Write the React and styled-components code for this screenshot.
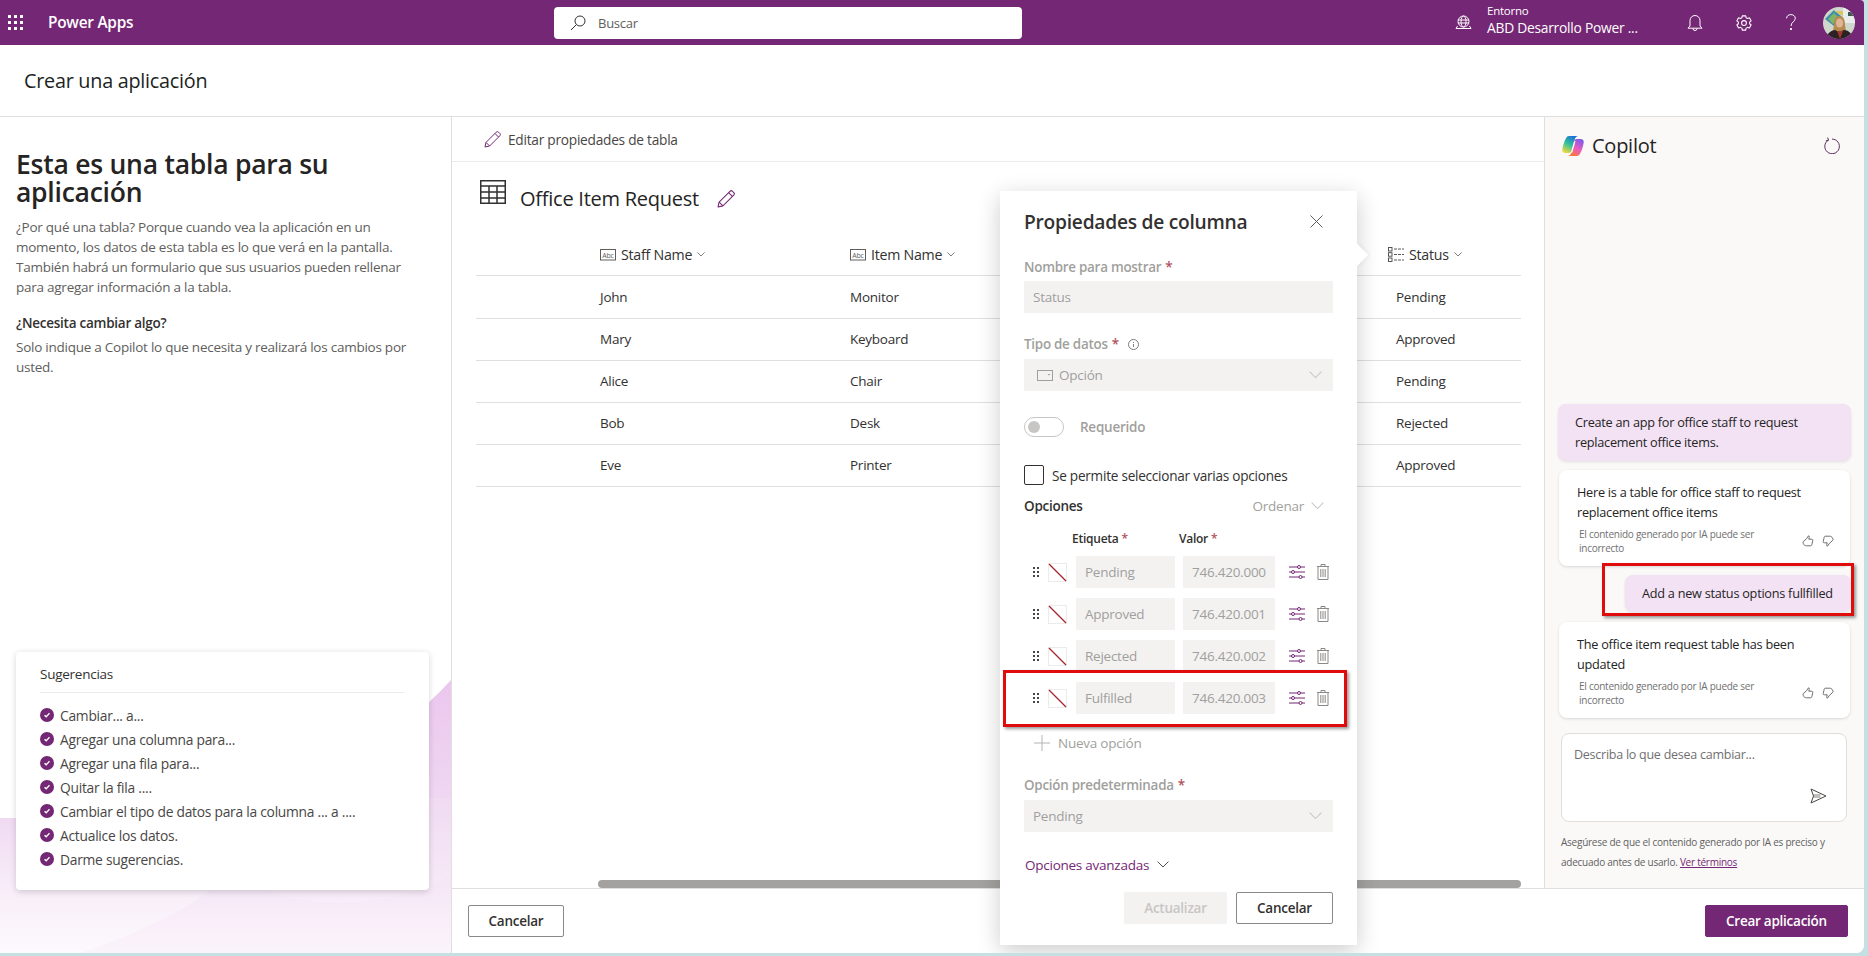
import React from 'react';
import styled, { createGlobalStyle } from 'styled-components';

const font = '"Open Sans", "Noto Sans", sans-serif';
const purple = '#742774';
const disabledText = '#a19f9d';

const GlobalStyle = createGlobalStyle`
  html, body {
    margin: 0;
    height: 100%;
    background: #c5e0e2;
    overflow: hidden;
  }
  * { box-sizing: border-box; }
  body {
    font-family: ${font};
    font-size: 14px;
    letter-spacing: -0.25px;
    color: #323130;
  }
`;

const Page = styled.div`
  position: relative;
  width: 1864px;
  height: 953px;
  background: #fff;
  display: flex;
  flex-direction: column;
  border-radius: 0 4px 8px 0;
  overflow: hidden;
`;

/* top bar */
const TopBar = styled.header`
  height: 45px;
  flex: none;
  background: ${purple};
  color: #fff;
  display: grid;
  grid-template-columns: 554px 468px 1fr;
  align-items: center;
`;
const Brand = styled.div`
  display: flex;
  align-items: center;
  padding-left: 8px;
  gap: 25px;
  font-size: 15.4px;
  font-weight: 600;
`;
const SearchBox = styled.div`
  height: 32px;
  background: #fff;
  border-radius: 4px;
  display: flex;
  align-items: center;
  gap: 12px;
  padding-left: 16px;
  color: #605e5c;
  font-size: 13px;
`;
const TopRight = styled.div`
  display: flex;
  align-items: center;
  padding-left: 433px;
`;
const EnvText = styled.div`
  margin-left: 15px;
  width: 200px;
  display: flex;
  flex-direction: column;
  small { font-size: 11.5px; line-height: 16px; margin-top: -6px; }
  span { font-size: 13.8px; line-height: 17px; }
`;
const TopIcon = styled.div`
  width: ${(p) => p.w || 16}px;
  margin-right: ${(p) => p.mr || 0}px;
  display: flex;
`;

/* page title */
const TitleBar = styled.div`
  height: 72px;
  flex: none;
  border-bottom: 1px solid #e1dfdd;
  padding-left: 24px;
  display: flex;
  align-items: center;
  font-size: 19.8px;
  font-weight: 500;
  color: #201f1e;
`;

const Main = styled.div`
  flex: 1;
  min-height: 0;
  display: flex;
`;

/* left column */
const Intro = styled.aside`
  position: relative;
  width: 452px;
  flex: none;
  border-right: 1px solid #e1dfdd;
  display: flex;
  flex-direction: column;
  padding: 33px 22px 63px 16px;
`;
const Wave = styled.svg`
  position: absolute;
  left: 0;
  bottom: 0;
  width: 451px;
  height: 275px;
`;
const IntroTitle = styled.h1`
  margin: 0;
  font-size: 26.5px;
  line-height: 28px;
  font-weight: 600;
  color: #252423;
`;
const IntroText = styled.p`
  margin: ${(p) => p.$mt}px 0 0;
  font-size: 13.5px;
  line-height: 20px;
  color: #605e5c;
`;
const IntroHeading = styled.h3`
  margin: 16px 0 0;
  font-size: 13.5px;
  line-height: 20px;
  font-weight: 600;
  color: #323130;
`;
const TipsCard = styled.section`
  position: relative;
  margin-top: auto;
  background: #fff;
  border-radius: 4px;
  box-shadow: 0 1.6px 6px rgba(0, 0, 0, 0.16);
  padding: 12px 25px 19px 24px;
`;
const TipsTitle = styled.div`
  font-size: 13.5px;
  line-height: 20px;
  font-weight: 500;
  padding-bottom: 8px;
  border-bottom: 1px solid #edebe9;
  margin-bottom: 10px;
`;
const Tip = styled.div`
  height: 24px;
  display: flex;
  align-items: center;
  gap: 6px;
  font-size: 13.8px;
  color: #484644;
`;

/* middle and copilot */
const Workspace = styled.div`
  flex: 1;
  min-width: 0;
  display: flex;
  flex-direction: column;
`;
const WorkTop = styled.div`
  flex: 1;
  min-height: 0;
  display: flex;
`;
const TableArea = styled.div`
  flex: 1;
  min-width: 0;
  display: flex;
  flex-direction: column;
`;
const Toolbar = styled.div`
  height: 45px;
  flex: none;
  border-bottom: 1px solid #edebe9;
  padding-left: 32px;
  display: flex;
  align-items: center;
  gap: 7px;
  font-size: 13.7px;
  color: #484644;
`;
const TableHead = styled.div`
  height: 74px;
  flex: none;
  padding: 18px 0 0 28px;
  display: flex;
  align-items: flex-start;
  color: #252423;
`;
const TableName = styled.div`
  margin: 6px 18px 0 14px;
  font-size: 20px;
  line-height: 26px;
  font-weight: 500;
`;
const TitlePencil = styled.div`
  margin-top: 10px;
`;
const TableGrid = styled.div`
  margin: 0 23px 0 24px;
`;
const Row = styled.div`
  display: grid;
  grid-template-columns: 124px 250px 546px 1fr;
  align-items: center;
  height: ${(p) => (p.$head ? 40 : 42)}px;
  margin-bottom: ${(p) => (p.$head ? 1 : 0)}px;
  padding-bottom: ${(p) => (p.$head ? 2 : 1)}px;
  border-bottom: 1px solid #e1dfdd;
  font-size: 13.5px;
  color: #323130;
`;
const HeadCell = styled.div`
  display: flex;
  align-items: center;
  gap: 5px;
  font-size: 14.2px;
  font-weight: 500;
  margin-left: ${(p) => p.$ml || 0}px;
`;
const Scroll = styled.div`
  margin: auto 23px 0 146px;
  height: 8px;
  flex: none;
  border-radius: 4px;
  background: #a3a2a1;
`;

const Copilot = styled.aside`
  width: 320px;
  flex: none;
  background: #faf9f8;
  border-left: 1px solid #e1dfdd;
  padding: 0 13px 16px;
  display: flex;
  flex-direction: column;
`;
const CopilotHead = styled.div`
  display: flex;
  align-items: center;
  padding: 15px 11px 0 4px;
  font-size: 20px;
  font-weight: 500;
  color: #252423;
  gap: 8px;
  span { flex: 1; }
`;
const Chat = styled.div`
  margin-top: auto;
  display: flex;
  flex-direction: column;
`;
const Bubble = styled.div`
  position: relative;
  align-self: flex-end;
  width: ${(p) => p.$w}px;
  margin-top: ${(p) => p.$mt || 0}px;
  padding: 8px 0 9px 17px;
  border-radius: 8px;
  background: #f3e2f4;
  box-shadow: 0 1px 3px rgba(0, 0, 0, 0.1);
  font-size: 12.7px;
  line-height: 20px;
  color: #242424;
  ${(p) => p.$marked && `
    &::after {
      content: '';
      position: absolute;
      inset: -12px -3px -4px -23px;
      border: 3px solid #e00b0b;
      box-shadow: 2px 2px 3px rgba(0, 0, 0, 0.4);
    }
  `}
`;
const Answer = styled.div`
  margin: ${(p) => p.$mt}px 1px 0;
  height: 96px;
  padding: 11.5px 16px 0 18px;
  border-radius: 8px;
  background: #fff;
  box-shadow: 0 1px 3px rgba(0, 0, 0, 0.14);
  font-size: 12.7px;
  line-height: 20px;
  color: #242424;
`;
const AnswerFoot = styled.div`
  display: flex;
  align-items: center;
  justify-content: space-between;
  margin-top: 5.5px;
  padding-left: 2px;
  small {
    width: 185px;
    font-size: 10px;
    line-height: 14px;
    color: #707070;
  }
`;
const Thumbs = styled.div`
  display: flex;
  gap: 8px;
`;
const PromptBox = styled.div`
  position: relative;
  margin: 15px 4px 0 3px;
  height: 89px;
  background: #fff;
  border: 1px solid #e0dedc;
  border-radius: 8px;
  padding: 11px 12px;
  font-size: 12.5px;
  line-height: 20px;
  color: #707070;
  display: flex;
  flex-direction: column;
  svg { align-self: flex-end; margin: 23px 7px 0 0; }
`;
const Disclaimer = styled.div`
  margin: 10px 0 0 3px;
  font-size: 10px;
  line-height: 20px;
  color: #616161;
  a { color: ${purple}; text-decoration: underline; }
`;

const Footer = styled.div`
  height: 65px;
  flex: none;
  border-top: 1px solid #e1dfdd;
  background: #fff;
  padding: 0 16px;
  display: flex;
  align-items: center;
  justify-content: space-between;
`;
const Button = styled.button`
  height: 32px;
  width: ${(p) => p.$w}px;
  padding: 0;
  font-family: ${font};
  font-size: 13.5px;
  letter-spacing: -0.25px;
  font-weight: 600;
  border-radius: 2px;
  border: 1px solid ${(p) => (p.$kind === 'primary' ? purple : p.$kind === 'off' ? '#f3f2f1' : '#8a8886')};
  background: ${(p) => (p.$kind === 'primary' ? purple : p.$kind === 'off' ? '#f3f2f1' : '#fff')};
  color: ${(p) => (p.$kind === 'primary' ? '#fff' : p.$kind === 'off' ? '#c8c6c4' : '#323130')};
`;

/* column properties panel */
const Panel = styled.div`
  position: absolute;
  left: 1000px;
  top: 191px;
  width: 357px;
  height: 754px;
  background: #fff;
  padding: 14px 24px 0;
  box-shadow: 0 6px 22px rgba(0, 0, 0, 0.2);
  &::after {
    content: '';
    position: absolute;
    left: 349px;
    top: 56px;
    width: 16px;
    height: 16px;
    background: #fff;
    transform: rotate(45deg);
    box-shadow: 2px -2px 4px rgba(0, 0, 0, 0.04);
  }
`;
const PanelTitle = styled.div`
  height: 32px;
  margin-bottom: 20px;
  display: flex;
  align-items: center;
  justify-content: space-between;
  padding-right: 10px;
  font-size: 19.2px;
  font-weight: 600;
  color: #323130;
`;
const Label = styled.div`
  margin-top: ${(p) => p.$mt}px;
  height: 20px;
  display: flex;
  align-items: center;
  font-size: 13.4px;
  font-weight: 600;
  color: ${disabledText};
  i { font-style: normal; color: #b0525a; margin-left: 4px; }
  svg { margin-left: 9px; }
`;
const Field = styled.div`
  margin-top: ${(p) => p.$mt}px;
  height: 32px;
  background: #f3f2f1;
  display: flex;
  align-items: center;
  justify-content: space-between;
  padding: 0 9px;
  font-size: 13.5px;
  color: ${disabledText};
  > svg:last-child { margin-right: 2px; }
`;
const FieldIcon = styled.span`
  display: flex;
  align-items: center;
  gap: 6px;
  padding-left: 4px;
`;
const Toggle = styled.div`
  margin-top: 26px;
  height: 20px;
  display: flex;
  align-items: center;
  gap: 16px;
  font-size: 13.5px;
  font-weight: 600;
  color: ${disabledText};
`;
const ToggleTrack = styled.span`
  width: 40px;
  height: 20px;
  border: 1px solid #c8c6c4;
  border-radius: 10px;
  padding: 3px;
  &::before {
    content: '';
    display: block;
    width: 12px;
    height: 12px;
    border-radius: 50%;
    background: #c8c6c4;
  }
`;
const CheckRow = styled.div`
  margin-top: 28px;
  height: 20px;
  display: flex;
  align-items: center;
  gap: 8px;
  font-size: 13.6px;
`;
const CheckBox = styled.span`
  width: 20px;
  height: 20px;
  border: 1px solid #323130;
  border-radius: 2px;
`;
const OptionsHead = styled.div`
  margin-top: 11px;
  height: 20px;
  display: flex;
  align-items: center;
  justify-content: space-between;
  font-size: 13.5px;
  font-weight: 600;
  span {
    display: flex;
    align-items: center;
    gap: 7px;
    padding-right: 9px;
    font-weight: 400;
    color: ${disabledText};
  }
`;
const OptionCols = styled.div`
  margin-top: 12px;
  height: 20px;
  padding-left: 48px;
  display: grid;
  grid-template-columns: 107px 1fr;
  align-items: center;
  font-size: 12px;
  font-weight: 600;
  i { font-style: normal; color: #b0525a; margin-left: 3px; }
`;
const OptionList = styled.div`
  margin-top: 8px;
  display: flex;
  flex-direction: column;
  gap: 10px;
`;
const OptionRow = styled.div`
  position: relative;
  height: 32px;
  display: flex;
  align-items: center;
  ${(p) => p.$marked && `
    &::after {
      content: '';
      position: absolute;
      inset: -12px -14px -13px -21px;
      border: 3px solid #e00b0b;
      box-shadow: 2px 2px 3px rgba(0, 0, 0, 0.4);
    }
  `}
`;
const Grip = styled.span`
  width: 24px;
  padding-left: 9px;
  display: flex;
`;
const Swatch = styled.svg`
  width: 19px;
  height: 19px;
  margin-right: 9px;
`;
const OptionInput = styled.div`
  width: ${(p) => p.$w}px;
  margin-right: ${(p) => p.$mr}px;
  height: 32px;
  background: #f3f2f1;
  padding-left: 9px;
  display: flex;
  align-items: center;
  font-size: 13.5px;
  color: ${disabledText};
`;
const AddOption = styled.div`
  margin-top: 17px;
  height: 24px;
  padding-left: 10px;
  display: flex;
  align-items: center;
  gap: 8px;
  font-size: 13.5px;
  color: ${disabledText};
`;
const Advanced = styled.div`
  margin-top: 23px;
  height: 20px;
  padding-left: 1px;
  display: flex;
  align-items: center;
  gap: 8px;
  font-size: 13.5px;
  color: ${purple};
`;
const PanelButtons = styled.div`
  margin-top: 17px;
  display: flex;
  justify-content: flex-end;
  gap: 9px;
`;

/* drawings */
const Waffle = () => (
  <svg width="15" height="15" viewBox="0 0 15 15" fill="#fff">
    {[0, 6, 12].map((y) => [0, 6, 12].map((x) => <rect key={`${x}${y}`} x={x} y={y} width="3" height="3" />))}
  </svg>
);
const SearchIcon = () => (
  <svg width="16" height="16" viewBox="0 0 16 16" fill="none" stroke="#323130" strokeWidth="1">
    <circle cx="10" cy="6" r="5" />
    <path d="M6.4 9.6 1 15" />
  </svg>
);
const GlobeIcon = () => (
  <svg width="17" height="16" viewBox="0 0 17 16" fill="none" stroke="#fff" strokeWidth="1">
    <circle cx="8.5" cy="6.5" r="5.5" />
    <ellipse cx="8.5" cy="6.5" rx="2.5" ry="5.5" />
    <path d="M3 5h11M3 8h11M1 13.5h15l-1.5-2.5M1 13.5 2.5 11" />
  </svg>
);
const BellIcon = () => (
  <svg width="16" height="17" viewBox="0 0 16 17" fill="none" stroke="#fff" strokeWidth="1">
    <path d="M3 12V6.5a5 5 0 0 1 10 0V12l2 2.2H1z" strokeLinejoin="round" />
    <path d="M6 14.5a2 2 0 0 0 4 0" />
  </svg>
);
const GearIcon = () => (
  <svg width="18" height="18" viewBox="0 0 24 24" fill="none" stroke="#fff" strokeWidth="1.4">
    <path d="M9.67 21.5 9.2 18.9a7.6 7.6 0 0 1-1.9-1.1l-2.5.9-2.3-4 2-1.700a7.6 7.6 0 0 1 0-2.200l-2-1.700 2.300-4 2.500.9a7.6 7.6 0 0 1 1.900-1.100l.47-2.400h4.660l.47 2.400a7.600 7.600 0 0 1 1.900 1.100l2.500-.9 2.300 4-2 1.700a7.600 7.600 0 0 1 0 2.200l2 1.700-2.300 4-2.500-.9a7.600 7.600 0 0 1-1.900 1.100l-.47 2.600z" strokeLinejoin="round" />
    <circle cx="12" cy="12" r="3.200" />
  </svg>
);
const HelpIcon = () => (
  <svg width="10" height="17" viewBox="0 0 10 17" fill="none" stroke="#fff" strokeWidth="1">
    <path d="M.6 4.4C.6 2 2.5.6 4.9.6c2.5 0 4.4 1.5 4.4 3.7 0 3.400-4.300 3.700-4.300 7.700" />
    <circle cx="5" cy="15" r=".7" fill="#fff" />
  </svg>
);
const Avatar = () => (
  <svg width="32" height="32" viewBox="0 0 32 32">
    <defs>
      <clipPath id="avatar-clip"><circle cx="16" cy="16" r="16" /></clipPath>
    </defs>
    <g clipPath="url(#avatar-clip)">
      <rect width="32" height="32" fill="#cfd6cc" />
      <rect x="20" width="12" height="16" fill="#e8ecea" />
      <path d="M2 12 11 3l8 7-8 9z" fill="#3f8ea8" />
      <path d="M5 12l6-6 5 5-6 6z" fill="#7fb56a" />
      <path d="M11 4h9v5z" fill="#d9c660" />
      <rect x="25" y="5" width="5" height="4" fill="#3a5a50" />
      <path d="M11 18c0-6 2-9 5.500-9s5.500 3 5.500 9l1 6H10z" fill="#b58a4f" />
      <ellipse cx="16.500" cy="16" rx="3.500" ry="4.500" fill="#e0b596" />
      <path d="M3 32c1-6 6-9 9-9l4 2 5-2c4 0 8 3 9 9z" fill="#2a2224" />
      <path d="M14 24l3 8 3-8z" fill="#a03a2e" />
    </g>
  </svg>
);
const Pencil = ({ size = 17 }) => (
  <svg width={size} height={size} viewBox="0 0 17 17" fill="none" stroke={purple} strokeWidth="1" strokeLinejoin="round">
    <path d="M1 16l1-4.600L12.200 1.200a1.700 1.700 0 0 1 2.400 0l1.200 1.200a1.700 1.700 0 0 1 0 2.400L5.600 15z" />
    <path d="M2 11.400 5.600 15M11 2.500l3.500 3.500" />
  </svg>
);
const TableIcon = () => (
  <svg width="26" height="24" viewBox="0 0 26 24" fill="none" stroke="#323130" strokeWidth="1.5">
    <rect x=".75" y=".75" width="24.500" height="22.500" />
    <path d="M.75 6h24.500M.75 12h24.500M.75 18h24.500M9 6v17M17 6v17" />
  </svg>
);
const AbcIcon = () => (
  <svg width="16" height="12" viewBox="0 0 16 12">
    <rect x=".5" y=".5" width="15" height="10.500" fill="none" stroke="#605e5c" />
    <text x="8" y="8.500" fontSize="7" fontFamily={font} fill="#605e5c" textAnchor="middle">Abc</text>
  </svg>
);
const ChoiceListIcon = () => (
  <svg width="16" height="15" viewBox="0 0 16 15" fill="none" stroke="#484644" strokeWidth=".9">
    <rect x=".5" y=".5" width="3.500" height="3.500" />
    <rect x=".5" y="5.700" width="3.500" height="3.500" />
    <rect x=".5" y="11" width="3.500" height="3.500" />
    <path d="M6 2h10M6 7.500h10M6 13h10" strokeDasharray="3 1" />
  </svg>
);
const Chevron = ({ width = 10, color = '#605e5c' }) => (
  <svg width={width} height={width * 0.6} viewBox="0 0 10 6" fill="none" stroke={color} strokeWidth={width > 10 ? 0.8 : 1}>
    <path d="M.5.5 5 5 9.500.5" />
  </svg>
);
const CheckDot = () => (
  <svg width="14" height="14" viewBox="0 0 14 14">
    <circle cx="7" cy="7" r="7" fill={purple} />
    <path d="M4.500 7.200 6.200 8.800 9.500 5.300" fill="none" stroke="#fff" strokeWidth="1.300" />
  </svg>
);
const CopilotLogo = () => (
  <svg width="22" height="20" viewBox="0 0 22 20">
    <defs>
      <linearGradient id="co-left" x1="0.7" y1="0" x2="0.2" y2="1">
        <stop offset="0" stopColor="#1b6fd8" />
        <stop offset="0.5" stopColor="#2fc29a" />
        <stop offset="1" stopColor="#f7d93a" />
      </linearGradient>
      <linearGradient id="co-right" x1="0.8" y1="0" x2="0.3" y2="1">
        <stop offset="0" stopColor="#7a5be8" />
        <stop offset="0.55" stopColor="#ea5cc0" />
        <stop offset="1" stopColor="#fa7a32" />
      </linearGradient>
    </defs>
    <path d="M7 0H16C14 .5 13.200 1.500 12.700 3.500L10 14.500C9.500 16 8.500 17 6.800 17H3.500C1 17 0 15.500.3 13.500 1 8.500 2.700 4.500 4 2.200 4.800.7 5.800 0 7 0Z" fill="url(#co-left)" />
    <path d="M14 3H18.500C20.800 3 22 4.500 21.700 6.500 21 11.500 19.300 15.500 18 17.800 17.200 19.300 16.200 20 15 20H6C8 19.500 8.800 18.500 9.300 16.500L12 5.500C12.300 4.300 13 3.400 14 3Z" fill="url(#co-right)" />
    <path d="M13.500 5 10.300 16.500 8.800 17 12 5.500Z" fill="#fff" />
  </svg>
);
const RefreshIcon = () => (
  <svg width="16" height="17" viewBox="0 0 16 17" fill="none" stroke="#5c2e5c" strokeWidth="1">
    <path d="M4.400 3.100a7.300 7.300 0 1 0 3.600-1" />
    <path d="M3.600.5l1 2.700-2.700.7" />
  </svg>
);
const ThumbUp = () => (
  <svg width="12" height="12" viewBox="0 0 12 12" fill="none" stroke="#605e5c" strokeWidth=".9">
    <path d="M6.500.8c.8 0 1 .9.7 1.900L6.800 4.200h3c.8 0 1.200.6 1 1.300l-1 4.300c-.2.600-.6 1-1.300 1H4.500c-1.500 0-2.700-.7-3-2L1 7.800c-.2-.8.200-1.300.8-1.600L4.600 3.700z" />
  </svg>
);
const ThumbDown = () => (
  <svg width="12" height="12" viewBox="0 0 12 12" fill="none" stroke="#605e5c" strokeWidth=".9" transform="rotate(180)">
    <path d="M6.500.8c.8 0 1 .9.7 1.900L6.800 4.200h3c.8 0 1.200.6 1 1.300l-1 4.300c-.2.600-.6 1-1.300 1H4.500c-1.500 0-2.700-.7-3-2L1 7.800c-.2-.8.200-1.300.8-1.600L4.600 3.700z" />
  </svg>
);
const SendIcon = () => (
  <svg width="17" height="16" viewBox="0 0 17 16" fill="none" stroke="#484644" strokeWidth="1" strokeLinejoin="round">
    <path d="M1 1l15 7-15 7 2.500-7z" />
    <path d="M3.500 7h7M3.500 9h7" strokeWidth=".7" />
  </svg>
);
const CloseIcon = () => (
  <svg width="13" height="13" viewBox="0 0 13 13" stroke="#605e5c" strokeWidth="1">
    <path d="M.5.5l12 12M12.500.5l-12 12" />
  </svg>
);
const InfoIcon = () => (
  <svg width="11" height="11" viewBox="0 0 11 11" fill="none" stroke="#605e5c" strokeWidth=".8">
    <circle cx="5.500" cy="5.500" r="5" />
    <path d="M5.500 5v3M5.500 3v1" />
  </svg>
);
const ChoiceFieldIcon = () => (
  <svg width="16" height="11" viewBox="0 0 16 11" fill="none" stroke={disabledText} strokeWidth="1">
    <rect x=".5" y=".5" width="15" height="10" />
    <path d="M10.500 4h3L12 5.500z" fill={disabledText} stroke="none" />
  </svg>
);
const GripIcon = () => (
  <svg width="6" height="10" viewBox="0 0 6 10" fill="#484644">
    {[0, 4, 8].map((y) => [0, 4].map((x) => <rect key={`${x}${y}`} x={x} y={y} width="2" height="2" />))}
  </svg>
);
const SlidersIcon = () => (
  <svg width="16" height="14" viewBox="0 0 16 14" fill="none" stroke={purple} strokeWidth="1">
    <path d="M0 2h16M0 7h16M0 12h16" />
    <circle cx="10" cy="2" r="1.500" fill="#fff" />
    <circle cx="4" cy="7" r="1.500" fill="#fff" />
    <circle cx="11.500" cy="12" r="1.500" fill="#fff" />
  </svg>
);
const TrashIcon = () => (
  <svg width="12" height="16" viewBox="0 0 12 16" fill="none" stroke="#8a8886" strokeWidth="1">
    <path d="M0 2.500h12M4 2.500V.5h4v2M1 2.500v13h10v-13M3.800 5v8M6 5v8M8.200 5v8" />
  </svg>
);
const PlusIcon = () => (
  <svg width="16" height="16" viewBox="0 0 16 16" stroke="#b5b3b1" strokeWidth="1">
    <path d="M8 0v16M0 8h16" />
  </svg>
);

const rows = [
  ['John', 'Monitor', 'Pending'],
  ['Mary', 'Keyboard', 'Approved'],
  ['Alice', 'Chair', 'Pending'],
  ['Bob', 'Desk', 'Rejected'],
  ['Eve', 'Printer', 'Approved'],
];

const tips = [
  'Cambiar... a...',
  'Agregar una columna para...',
  'Agregar una fila para...',
  'Quitar la fila ....',
  'Cambiar el tipo de datos para la columna ... a ....',
  'Actualice los datos.',
  'Darme sugerencias.',
];

const options = [
  ['Pending', '746.420.000'],
  ['Approved', '746.420.001'],
  ['Rejected', '746.420.002'],
  ['Fulfilled', '746.420.003'],
];

const ColumnPanel = () => (
  <Panel>
    <PanelTitle>
      Propiedades de columna
      <CloseIcon />
    </PanelTitle>
    <Label $mt={0}>Nombre para mostrar<i>*</i></Label>
    <Field $mt={4}>Status</Field>
    <Label $mt={21}>Tipo de datos<i>*</i><InfoIcon /></Label>
    <Field $mt={5}>
      <FieldIcon><ChoiceFieldIcon />Opción</FieldIcon>
      <Chevron width={13} color="#c8c6c4" />
    </Field>
    <Toggle><ToggleTrack />Requerido</Toggle>
    <CheckRow><CheckBox />Se permite seleccionar varias opciones</CheckRow>
    <OptionsHead>
      Opciones
      <span>Ordenar <Chevron width={13} color="#c8c6c4" /></span>
    </OptionsHead>
    <OptionCols>
      <div>Etiqueta<i>*</i></div>
      <div>Valor<i>*</i></div>
    </OptionCols>
    <OptionList>
      {options.map(([label, value]) => (
        <OptionRow key={value} $marked={label === 'Fulfilled'}>
          <Grip><GripIcon /></Grip>
          <Swatch viewBox="0 0 19 19">
            <rect x=".5" y=".5" width="18" height="18" fill="#fff" stroke="#edebe9" />
            <path d="M1 1l17 17" stroke="#a4262c" strokeWidth="1.200" />
          </Swatch>
          <OptionInput $w={99} $mr={8}>{label}</OptionInput>
          <OptionInput $w={92} $mr={14}>{value}</OptionInput>
          <TopIcon w={16} mr={12}><SlidersIcon /></TopIcon>
          <TrashIcon />
        </OptionRow>
      ))}
    </OptionList>
    <AddOption><PlusIcon />Nueva opción</AddOption>
    <Label $mt={20}>Opción predeterminada<i>*</i></Label>
    <Field $mt={5}>
      Pending
      <Chevron width={13} color="#c8c6c4" />
    </Field>
    <Advanced>Opciones avanzadas <Chevron width={12} color="#484644" /></Advanced>
    <PanelButtons>
      <Button $w={103} $kind="off">Actualizar</Button>
      <Button $w={97}>Cancelar</Button>
    </PanelButtons>
  </Panel>
);

const App = () => (
  <Page>
    <GlobalStyle />
    <TopBar>
      <Brand><Waffle />Power Apps</Brand>
      <SearchBox><SearchIcon />Buscar</SearchBox>
      <TopRight>
        <GlobeIcon />
        <EnvText>
          <small>Entorno</small>
          <span>ABD Desarrollo Power ...</span>
        </EnvText>
        <TopIcon mr={32}><BellIcon /></TopIcon>
        <TopIcon w={18} mr={33}><GearIcon /></TopIcon>
        <TopIcon w={10} mr={27}><HelpIcon /></TopIcon>
        <Avatar />
      </TopRight>
    </TopBar>
    <TitleBar>Crear una aplicación</TitleBar>
    <Main>
      <Intro>
        <Wave viewBox="0 0 451 275">
          <defs>
            <linearGradient id="wave-fill" x1="0" y1="0" x2="0" y2="1">
              <stop offset="0" stopColor="#ebc6ee" />
              <stop offset="0.5" stopColor="#f0d9f2" />
              <stop offset="1" stopColor="#fbf4fb" />
            </linearGradient>
            <linearGradient id="wave-light" x1="0" y1="0" x2="0" y2="1">
              <stop offset="0" stopColor="#fff" stopOpacity="0" />
              <stop offset="1" stopColor="#fff" stopOpacity="0.45" />
            </linearGradient>
          </defs>
          <path d="M0 140H120C260 140 370 90 451 2V275H0Z" fill="url(#wave-fill)" />
          <path d="M0 140V275H80C140 255 190 230 215 208L270 140Z" fill="url(#wave-light)" />
          <path d="M258 208C300 232 390 232 451 198V120H250Z" fill="#fff" opacity=".12" />
        </Wave>
        <IntroTitle>Esta es una tabla para su aplicación</IntroTitle>
        <IntroText $mt={11}>
          ¿Por qué una tabla? Porque cuando vea la aplicación en un momento, los datos de esta tabla es lo que verá en la pantalla.
          También habrá un formulario que sus usuarios pueden rellenar para agregar información a la tabla.
        </IntroText>
        <IntroHeading>¿Necesita cambiar algo?</IntroHeading>
        <IntroText $mt={4}>Solo indique a Copilot lo que necesita y realizará los cambios por usted.</IntroText>
        <TipsCard>
          <TipsTitle>Sugerencias</TipsTitle>
          {tips.map((tip) => (
            <Tip key={tip}><CheckDot />{tip}</Tip>
          ))}
        </TipsCard>
      </Intro>
      <Workspace>
        <WorkTop>
          <TableArea>
            <Toolbar><Pencil />Editar propiedades de tabla</Toolbar>
            <TableHead>
              <TableIcon />
              <TableName>Office Item Request</TableName>
              <TitlePencil><Pencil size={18} /></TitlePencil>
            </TableHead>
            <TableGrid>
              <Row $head>
                <span />
                <HeadCell><AbcIcon />Staff Name <Chevron width={8} /></HeadCell>
                <HeadCell><AbcIcon />Item Name <Chevron width={8} /></HeadCell>
                <HeadCell $ml={-8}><ChoiceListIcon />Status <Chevron width={8} /></HeadCell>
              </Row>
              {rows.map(([staff, item, status]) => (
                <Row key={staff}>
                  <span />
                  <div>{staff}</div>
                  <div>{item}</div>
                  <div>{status}</div>
                </Row>
              ))}
            </TableGrid>
            <Scroll />
          </TableArea>
          <Copilot>
            <CopilotHead>
              <CopilotLogo />
              <span>Copilot</span>
              <RefreshIcon />
            </CopilotHead>
            <Chat>
              <Bubble $w={293}>Create an app for office staff to request replacement office items.</Bubble>
              <Answer $mt={9}>
                Here is a table for office staff to request replacement office items
                <AnswerFoot>
                  <small>El contenido generado por IA puede ser incorrecto</small>
                  <Thumbs><ThumbUp /><ThumbDown /></Thumbs>
                </AnswerFoot>
              </Answer>
              <Bubble $w={226} $mt={9} $marked>Add a new status options fullfilled</Bubble>
              <Answer $mt={10}>
                The office item request table has been updated
                <AnswerFoot>
                  <small>El contenido generado por IA puede ser incorrecto</small>
                  <Thumbs><ThumbUp /><ThumbDown /></Thumbs>
                </AnswerFoot>
              </Answer>
            </Chat>
            <PromptBox>
              Describa lo que desea cambiar...
              <SendIcon />
            </PromptBox>
            <Disclaimer>
              Asegúrese de que el contenido generado por IA es preciso y adecuado antes de usarlo. <a href="#terminos">Ver términos</a>
            </Disclaimer>
          </Copilot>
        </WorkTop>
        <Footer>
          <Button $w={96}>Cancelar</Button>
          <Button $w={143} $kind="primary">Crear aplicación</Button>
        </Footer>
      </Workspace>
    </Main>
    <ColumnPanel />
  </Page>
);

export default App;
